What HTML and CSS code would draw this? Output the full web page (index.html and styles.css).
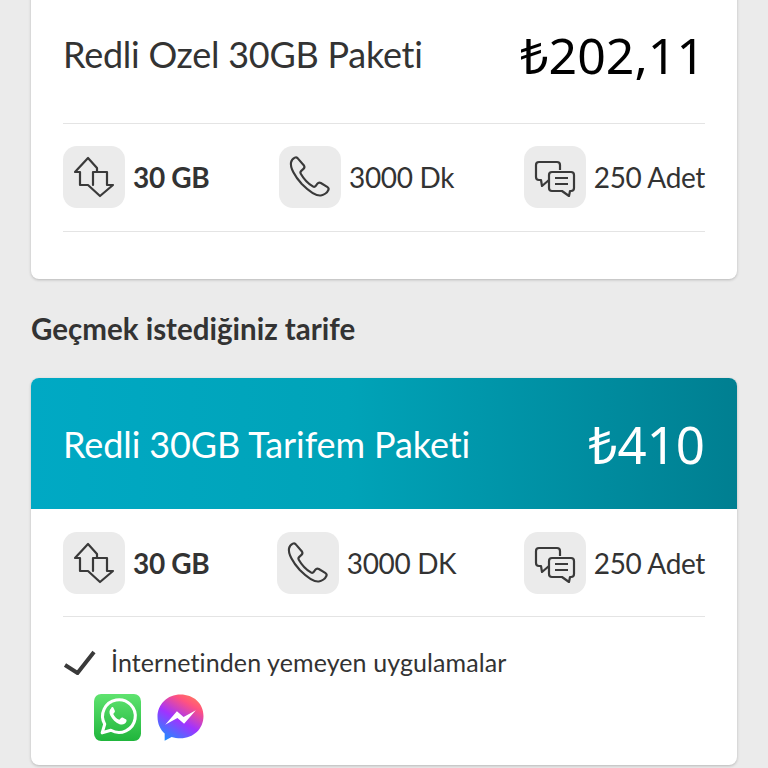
FILE: index.html
```html
<!DOCTYPE html>
<html lang="tr">
<head>
<meta charset="utf-8">
<title>Tarife</title>
<link rel="stylesheet" href="styles.css">
</head>
<body>
<svg class="defs" width="0" height="0" aria-hidden="true">
  <symbol id="i-data" viewBox="0 0 62 62">
    <path d="M34 26V22L25 12 12 26H17V39H25L37 50 50 39H44V26H30V39" fill="none" stroke="#3a3a3a" stroke-width="2.200" stroke-linejoin="round" stroke-linecap="round"/>
  </symbol>
  <symbol id="i-phone" viewBox="0 0 62 62">
    <path transform="translate(12 12) scale(1.27) translate(-6 -5.500)" d="M6 9c-.8 4 3 11 8.500 17 5.500 5.500 11.500 9.500 15 9 2-.3 5-2 6-4.500.4-1-.2-1.800-1-2.300l-5-3c-1-.6-2-.4-2.700.5l-1.300 1.800c-.6.8-1.500.9-2.300.4-3-1.800-7.500-6.500-9.500-10-.5-.9-.3-1.700.4-2.300l1.700-1.500c.8-.7 1-1.700.4-2.700L11.500 6c-.6-1-1.500-1.300-2.500-.8C7.800 5.800 6.300 7.500 6 9z" fill="none" stroke="#3a3a3a" stroke-width="1.700" stroke-linejoin="round"/>
  </symbol>
  <symbol id="i-chat" viewBox="0 0 62 62">
    <path d="M36 24V19a3 3 0 0 0-3-3H15a3 3 0 0 0-3 3V31a3 3 0 0 0 3 3h2l1 6 7-6" fill="none" stroke="#3a3a3a" stroke-width="2.200" stroke-linejoin="round"/>
    <path d="M28 26H47a3 3 0 0 1 3 3V42a3 3 0 0 1-3 3H46l-1 5-7-5H28a3 3 0 0 1-3-3V29a3 3 0 0 1 3-3z" fill="none" stroke="#3a3a3a" stroke-width="2.200" stroke-linejoin="round"/>
    <path d="M31 32H44M31 38H44" fill="none" stroke="#3a3a3a" stroke-width="2.200"/>
  </symbol>
</svg>

<main class="page">
  <section class="card card-current">
    <header class="plan-head">
      <h2 class="plan-name">Redli Ozel 30GB Paketi</h2>
      <div class="plan-price price-current">₺202,11</div>
    </header>
    <div class="stats stats-top">
      <div class="stat">
        <span class="stat-icon"><svg class="icon"><use href="#i-data"/></svg></span>
        <span class="stat-text strong">30 GB</span>
      </div>
      <div class="stat">
        <span class="stat-icon"><svg class="icon"><use href="#i-phone"/></svg></span>
        <span class="stat-text">3000 Dk</span>
      </div>
      <div class="stat">
        <span class="stat-icon"><svg class="icon"><use href="#i-chat"/></svg></span>
        <span class="stat-text">250 Adet</span>
      </div>
    </div>
  </section>

  <h1 class="section-title">Geçmek istediğiniz tarife</h1>

  <section class="card card-next">
    <header class="banner">
      <h2 class="plan-name">Redli 30GB Tarifem Paketi</h2>
      <div class="plan-price price-next">₺410</div>
    </header>
    <div class="stats stats-next">
      <div class="stat">
        <span class="stat-icon"><svg class="icon"><use href="#i-data"/></svg></span>
        <span class="stat-text strong">30 GB</span>
      </div>
      <div class="stat">
        <span class="stat-icon"><svg class="icon"><use href="#i-phone"/></svg></span>
        <span class="stat-text">3000 DK</span>
      </div>
      <div class="stat">
        <span class="stat-icon"><svg class="icon"><use href="#i-chat"/></svg></span>
        <span class="stat-text">250 Adet</span>
      </div>
    </div>
    <div class="perk">
      <svg class="check" viewBox="0 0 33 25"><path d="M2 15l12.500 8L31 2" fill="none" stroke="#3a3a3a" stroke-width="4"/></svg>
      <span class="perk-text">İnternetinden yemeyen uygulamalar</span>
    </div>
    <div class="apps">
      <svg class="app" viewBox="0 0 46 46">
        <defs><linearGradient id="wa" x1="0" y1="0" x2="0" y2="1"><stop offset="0" stop-color="#5fe36f"/><stop offset="1" stop-color="#20b53c"/></linearGradient></defs>
        <rect width="46" height="46" rx="7" fill="url(#wa)"/>
        <path d="M8 38l2.500-8.500A16 16 0 1 1 16.500 35.500z" fill="none" stroke="#fff" stroke-width="3" stroke-linejoin="round"/>
        <path d="M17 14c-2 1.500-2.500 4-1 7 2 4 5 7 9 8.500 3 1 5.500 0 6.500-2 .5-1 .5-2 0-2.500l-3.500-2c-.7-.3-1.200 0-1.600.5l-1 1.300c-.4.4-.8.4-1.300.2-2-.9-4-2.800-5-5-.2-.4-.1-.8.2-1.100l.9-1.100c.3-.4.4-.8.200-1.300l-1.500-3.300c-.4-.8-1.300-.8-2.400.8z" fill="#fff"/>
      </svg>
      <svg class="app" viewBox="0 0 46 46">
        <defs><linearGradient id="ms" x1="0.2" y1="1" x2="0.8" y2="0"><stop offset="0" stop-color="#1f8dff"/><stop offset="0.45" stop-color="#a033ff"/><stop offset="0.8" stop-color="#ff5280"/><stop offset="1" stop-color="#ff7a5c"/></linearGradient></defs>
        <path d="M23 0.500C10.300.5.500 9.900.500 22.500c0 6.600 2.700 12.300 7 16.200v7l6.800-3.700c2.600.8 5.700 1.300 8.700 1.300 12.700 0 22.500-9.200 22.500-21.800S35.700.500 23 .500z" fill="url(#ms)"/>
        <path d="M8 30l11.500-13 6.500 5.500 12-6.500-11.500 13-6.500-5.500z" fill="#fff"/>
      </svg>
    </div>
  </section>
</main>
</body>
</html>
```

FILE: styles.css
```css
* { box-sizing: border-box; }
html, body { margin: 0; height: 100%; }
body {
  background: #ebebeb;
  font-family: Lato, "Noto Sans", "DejaVu Sans", sans-serif;
  color: #333;
  overflow: hidden;
}
.defs { position: absolute; }
.page {
  margin-top: -12px;
  padding: 0 31px;
}
.card {
  background: #fff;
  border-radius: 8px;
  box-shadow: 0 1px 3px rgba(0, 0, 0, 0.22);
  overflow: hidden;
}
.card-current { padding: 0 32px; height: 291px; }
.plan-head {
  height: 136px;
  display: flex;
  justify-content: space-between;
  align-items: center;
  border-bottom: 1px solid #e4e4e4;
}
.plan-head .plan-name { margin-bottom: 4px; }
.plan-name {
  margin: 0;
  font-size: 36px;
  font-weight: 400;
  letter-spacing: -0.25px;
}
.banner .plan-name { letter-spacing: -0.1px; }
.plan-price {
  font-family: "Noto Sans", "DejaVu Sans", sans-serif;
  font-size: 50px;
  font-weight: 400;
  line-height: 1;
}
.price-current { color: #000; margin-bottom: 2px; }
.price-next { font-size: 51px; margin-top: 2px; }
.stats {
  display: flex;
  justify-content: space-between;
  align-items: center;
  height: 108px;
  border-bottom: 1px solid #e4e4e4;
}
.stats-top { padding-bottom: 1px; }
.stat { display: flex; align-items: center; gap: 8px; }
.stat-icon {
  width: 62px;
  height: 62px;
  border-radius: 14px;
  background: #ebebeb;
  display: flex;
  align-items: center;
  justify-content: center;
}
.icon { width: 62px; height: 62px; }
.stat-text { font-size: 28px; letter-spacing: -0.35px; }
.strong { font-weight: 700; }
.section-title {
  margin: 35px 0 34px;
  font-size: 29.500px;
  line-height: 30px;
  font-weight: 700;
}
.card-next { height: 387px; }
.banner {
  height: 131px;
  padding: 0 32px;
  display: flex;
  justify-content: space-between;
  align-items: center;
  color: #fff;
  background: linear-gradient(90deg, #00a9c4 0%, #00a3b8 45%, #007f91 100%);
}
.stats-next {
  margin: 0 32px;
  height: 108px;
}
.perk {
  margin: 30px 32px 0;
  display: flex;
  align-items: center;
  gap: 15px;
  height: 30px;
}
.check { width: 33px; height: 25px; }
.perk-text { font-size: 25px; letter-spacing: 0.1px; }
.apps {
  margin: 17px 0 0 63px;
  display: flex;
  gap: 16px;
}
.app { width: 47px; height: 47px; }
```
